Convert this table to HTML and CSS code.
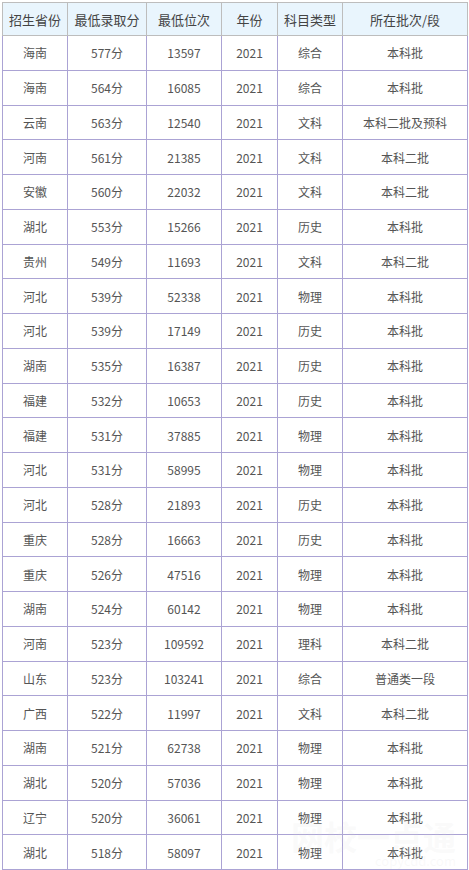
FILE: index.html
```html
<!DOCTYPE html>
<html lang="zh-CN">
<head>
<meta charset="utf-8">
<title>录取分数</title>
<link rel="stylesheet" href="styles.css">
</head>
<body>
<table class="score-table">
  <colgroup>
    <col class="c1"><col class="c2"><col class="c3"><col class="c4"><col class="c5"><col class="c6">
  </colgroup>
  <thead>
    <tr><th>招生省份</th><th>最低录取分</th><th>最低位次</th><th>年份</th><th>科目类型</th><th>所在批次/段</th></tr>
  </thead>
  <tbody>
    <tr><td>海南</td><td>577分</td><td>13597</td><td>2021</td><td>综合</td><td>本科批</td></tr>
    <tr><td>海南</td><td>564分</td><td>16085</td><td>2021</td><td>综合</td><td>本科批</td></tr>
    <tr><td>云南</td><td>563分</td><td>12540</td><td>2021</td><td>文科</td><td>本科二批及预科</td></tr>
    <tr><td>河南</td><td>561分</td><td>21385</td><td>2021</td><td>文科</td><td>本科二批</td></tr>
    <tr><td>安徽</td><td>560分</td><td>22032</td><td>2021</td><td>文科</td><td>本科二批</td></tr>
    <tr><td>湖北</td><td>553分</td><td>15266</td><td>2021</td><td>历史</td><td>本科批</td></tr>
    <tr><td>贵州</td><td>549分</td><td>11693</td><td>2021</td><td>文科</td><td>本科二批</td></tr>
    <tr><td>河北</td><td>539分</td><td>52338</td><td>2021</td><td>物理</td><td>本科批</td></tr>
    <tr><td>河北</td><td>539分</td><td>17149</td><td>2021</td><td>历史</td><td>本科批</td></tr>
    <tr><td>湖南</td><td>535分</td><td>16387</td><td>2021</td><td>历史</td><td>本科批</td></tr>
    <tr><td>福建</td><td>532分</td><td>10653</td><td>2021</td><td>历史</td><td>本科批</td></tr>
    <tr><td>福建</td><td>531分</td><td>37885</td><td>2021</td><td>物理</td><td>本科批</td></tr>
    <tr><td>河北</td><td>531分</td><td>58995</td><td>2021</td><td>物理</td><td>本科批</td></tr>
    <tr><td>河北</td><td>528分</td><td>21893</td><td>2021</td><td>历史</td><td>本科批</td></tr>
    <tr><td>重庆</td><td>528分</td><td>16663</td><td>2021</td><td>历史</td><td>本科批</td></tr>
    <tr><td>重庆</td><td>526分</td><td>47516</td><td>2021</td><td>物理</td><td>本科批</td></tr>
    <tr><td>湖南</td><td>524分</td><td>60142</td><td>2021</td><td>物理</td><td>本科批</td></tr>
    <tr><td>河南</td><td>523分</td><td>109592</td><td>2021</td><td>理科</td><td>本科二批</td></tr>
    <tr><td>山东</td><td>523分</td><td>103241</td><td>2021</td><td>综合</td><td>普通类一段</td></tr>
    <tr><td>广西</td><td>522分</td><td>11997</td><td>2021</td><td>文科</td><td>本科二批</td></tr>
    <tr><td>湖南</td><td>521分</td><td>62738</td><td>2021</td><td>物理</td><td>本科批</td></tr>
    <tr><td>湖北</td><td>520分</td><td>57036</td><td>2021</td><td>物理</td><td>本科批</td></tr>
    <tr><td>辽宁</td><td>520分</td><td>36061</td><td>2021</td><td>物理</td><td>本科批</td></tr>
    <tr><td>湖北</td><td>518分</td><td>58097</td><td>2021</td><td>物理</td><td>本科批</td></tr>
  </tbody>
</table>
<div class="watermark">
  <span class="wm-big">网校一点通</span>
  <span class="wm-small">copycdd.com</span>
</div>
</body>
</html>
```
FILE: styles.css
```css
html, body {
  margin: 0;
  padding: 0;
  background: #fff;
}
body {
  padding: 2px 0 0 2px;
  font-family: "Noto Sans CJK SC", "Noto Sans", sans-serif;
  color: #555;
  overflow: hidden;
  height: 870px;
  box-sizing: border-box;
  position: relative;
}
.score-table {
  border-collapse: collapse;
  table-layout: fixed;
  width: 465px;
}
.c1 { width: 65px; }
.c2 { width: 79px; }
.c3 { width: 75px; }
.c4 { width: 56px; }
.c5 { width: 65px; }
.c6 { width: 125px; }
.score-table th {
  height: 32px;
  padding: 0;
  background: #e9f5fd;
  border: 1px solid #bdbdbd;
  font-weight: normal;
  font-size: 13px;
  color: #444;
  text-align: center;
  vertical-align: middle;
}
.score-table td {
  height: 34.75px;
  padding: 0;
  border: 1px solid #aba3d4;
  font-size: 12px;
  text-align: center;
  vertical-align: middle;
  box-sizing: border-box;
}
.watermark {
  position: absolute;
  left: 286px;
  top: 816px;
  display: flex;
  flex-direction: column;
  align-items: flex-end;
  pointer-events: none;
  width: 170px;
}
.wm-big {
  font-weight: bold;
  font-size: 33px;
  line-height: 40px;
  color: rgba(215, 215, 215, 0.14);
}
.wm-small {
  font-size: 13px;
  line-height: 14px;
  margin-top: -2px;
  color: rgba(215, 215, 215, 0.16);
}
```
